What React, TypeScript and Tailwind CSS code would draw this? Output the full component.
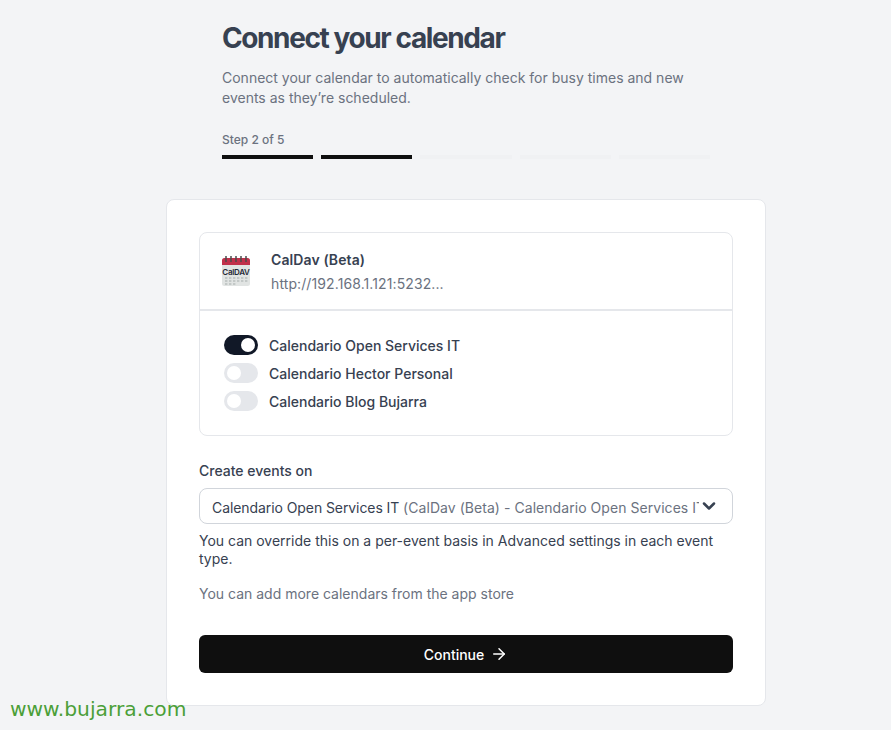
import { ArrowRight, ChevronDown } from 'lucide-react'

function Toggle({ on }: { on?: boolean }) {
  return (
    <span className={`flex h-5 w-[34px] shrink-0 items-center rounded-full px-[3px] ${on ? 'justify-end bg-[#111827]' : 'justify-start bg-[#e5e7eb]'}`}>
      <span className="h-3.5 w-3.5 rounded-full bg-white" />
    </span>
  )
}

function CalDavIcon() {
  return (
    <svg width="30" height="32" viewBox="0 0 30 32" className="shrink-0">
      <rect x="1" y="3" width="28" height="28" rx="2.5" fill="#e1e4e3" />
      <path d="M1 10V5.5A2.5 2.5 0 0 1 3.5 3h23A2.5 2.5 0 0 1 29 5.5V10z" fill="#c0304a" />
      {[5, 10, 15, 20, 25].map((x) => (
        <rect key={x} x={x - 0.75} y="1" width="1.5" height="6" fill="#4b4b4b" />
      ))}
      <text x="15" y="20" textAnchor="middle" fontFamily="Inter, sans-serif" fontWeight="600" fontSize="8" letterSpacing="-0.3" fill="#1f2937">CalDAV</text>
      {[23, 26, 29].map((y) =>
        [4, 8, 12, 16, 20, 24].slice(0, y === 29 ? 3 : 6).map((x) => (
          <rect key={`${x}-${y}`} x={x} y={y - 1} width="2.4" height="2" fill="#c3c8c7" />
        ))
      )}
    </svg>
  )
}

const calendars = [
  { name: 'Calendario Open Services IT', on: true },
  { name: 'Calendario Hector Personal', on: false },
  { name: 'Calendario Blog Bujarra', on: false },
]

export default function App() {
  return (
    <div className="relative h-[730px] overflow-hidden bg-[#f3f4f6] font-['Inter',sans-serif]">
      <div className="ml-[166px] w-[600px] pt-5">
        <div className="ml-14 w-[488px]">
          <h1 className="font-['Inter',sans-serif] text-[28px] leading-9 font-bold tracking-[-0.05em] text-[#374151]">Connect your calendar</h1>
          <p className="mt-3 text-sm leading-5 text-[#6b7280]">
            Connect your calendar to automatically check for busy times and new events as they’re scheduled.
          </p>
          <p className="mt-6 text-xs leading-4 font-medium text-[#6b7280]">Step 2 of 5</p>
          <div className="mt-[7px] flex gap-2">
            <div className="h-1 flex-1 bg-[#0f0f0f]" />
            <div className="h-1 flex-1 bg-[#0f0f0f]" />
            <div className="h-1 flex-1 bg-[#f0f1f3]" />
            <div className="h-1 flex-1 bg-[#f0f1f3]" />
            <div className="h-1 flex-1 bg-[#f0f1f3]" />
          </div>
        </div>

        <div className="mt-10 h-[507px] rounded-lg border border-[#e5e7eb] bg-white p-8">
          <div className="rounded-lg border border-[#e5e7eb]">
            <div className="flex h-[78px] items-center gap-5 border-b-2 border-[#e5e7eb] pl-[21px]">
              <CalDavIcon />
              <div className="mt-0.5 tracking-[0.1px]">
                <p className="text-sm leading-5 font-semibold text-[#374151]">CalDav (Beta)</p>
                <p className="mt-1 text-sm leading-5 text-[#6b7280]">http://192.168.1.121:5232...</p>
              </div>
            </div>
            <div className="flex flex-col gap-2 pt-6 pb-6 pl-6">
              {calendars.map((c) => (
                <div key={c.name} className="flex items-center gap-[11px]">
                  <Toggle on={c.on} />
                  <span className="pt-0.5 text-sm leading-[18px] font-medium text-[#374151]">{c.name}</span>
                </div>
              ))}
            </div>
          </div>

          <p className="mt-[25px] text-sm leading-5 font-medium text-[#374151]">Create events on</p>
          <div className="mt-[7px] flex h-9 items-center rounded-lg border border-[#d1d5db] pr-[13px] pl-3">
            <span className="mt-1 min-w-0 flex-1 overflow-hidden text-sm leading-5 tracking-[-0.08px] whitespace-nowrap text-[#374151]">
              Calendario Open Services IT <span className="tracking-[0.05px] text-[#6b7280]">(CalDav (Beta) - Calendario Open Services IT)</span>
            </span>
            <ChevronDown size={20} strokeWidth={3} className="shrink-0 text-[#374151]" />
          </div>
          <p className="mt-2 text-sm leading-[18px] text-[#374151]">
            You can override this on a per-event basis in Advanced settings in each event type.
          </p>
          <p className="mt-4 text-sm leading-5 text-[#6b7280]">You can add more calendars from the app store</p>
          <button className="mt-[31px] flex h-[38px] w-full items-center justify-center gap-1.5 rounded-md bg-[#0f0f0f] text-sm font-medium text-white">
            <span className="pt-0.5">Continue</span>
            <ArrowRight size={18} />
          </button>
        </div>
      </div>
      <span className="absolute top-[697px] left-[10px] font-['DejaVu_Sans',sans-serif] text-[20.25px] leading-6 text-[#4b9f38]">www.bujarra.com</span>
    </div>
  )
}
